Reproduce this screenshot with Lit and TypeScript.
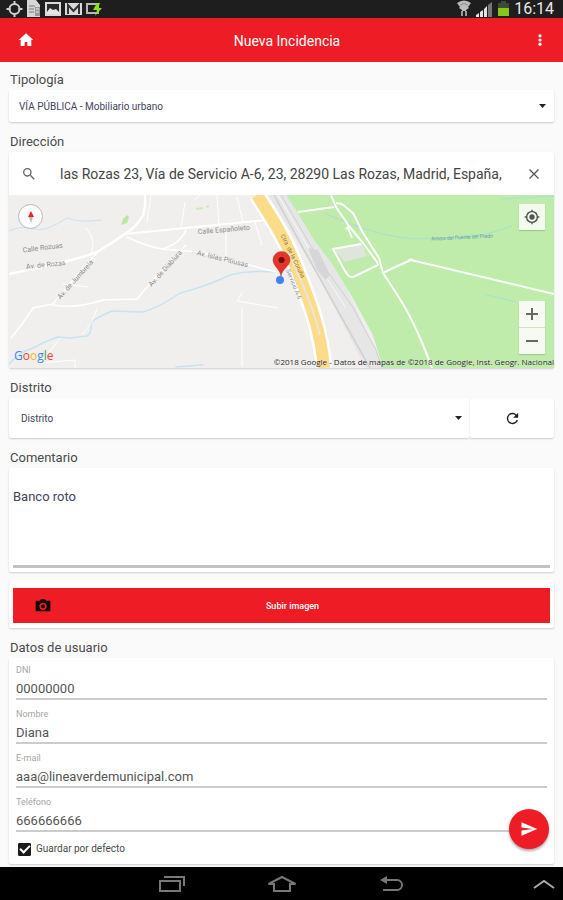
import { LitElement, html, css, svg } from "lit";
import { customElement, state } from "lit/decorators.js";

interface Field {
  id: string;
  label: string;
  value: string;
  type: string;
}

const FIELDS: Field[] = [
  { id: "dni", label: "DNI", value: "00000000", type: "text" },
  { id: "nombre", label: "Nombre", value: "Diana", type: "text" },
  { id: "email", label: "E-mail", value: "aaa@lineaverdemunicipal.com", type: "email" },
  { id: "telefono", label: "Teléfono", value: "666666666", type: "tel" },
];

@customElement("status-bar")
class StatusBar extends LitElement {
  static styles = css`
    :host {
      display: flex;
      align-items: center;
      justify-content: space-between;
      height: 18px;
      padding: 0 9px 0 6px;
      background: #1e1e1e;
      color: #e8e8e8;
      font: 16px/18px Roboto, sans-serif;
    }
    .group {
      display: flex;
      align-items: center;
      gap: 4px;
    }
    svg {
      display: block;
    }
  `;
  render() {
    return html`
      <div class="group">
        <svg width="17" height="18" viewBox="0 0 17 18" fill="none" stroke="#d0d0d0">
          <circle cx="8.500" cy="9" r="5" stroke-width="2" />
          <path d="M8.500 1v4M8.500 13v4M.5 9h4M12.500 9h4" stroke-width="2" />
        </svg>
        <svg width="14" height="18" viewBox="0 0 14 18">
          <path d="M0 0h9l4 5v12H0z" fill="#d6d6d6" />
          <path d="M2 6h6M2 9h5M2 12h5" stroke="#777" />
          <path d="M8 7h5v9H8z" fill="#999" />
          <path d="M9 9h3M9 12h3" stroke="#eee" />
        </svg>
        <svg width="16" height="18" viewBox="0 0 16 18">
          <path d="M0 2h16v14H0z" fill="#dadada" />
          <path d="M2 4h12v10H2z" fill="#2a2a2a" />
          <path d="M2 12l3-4 3 2 3-1 3 3v2H2z" fill="#e6e6e6" />
        </svg>
        <svg width="17" height="18" viewBox="0 0 17 18">
          <path d="M0 3h17v12H0z" fill="#dadada" />
          <path d="M3 14V5l5.500 6L14 5v9" fill="none" stroke="#333" stroke-width="2" />
        </svg>
        <svg width="16" height="18" viewBox="0 0 16 18">
          <path d="M1 4h11v9H1z" fill="none" stroke="#b9b9b9" stroke-width="2" />
          <path d="M11 3l-4 7h4l-2 6 7-8h-4l2-5z" fill="#8fe01c" />
        </svg>
      </div>
      <div class="group">
        <svg width="16" height="18" viewBox="0 0 16 18">
          <path d="M1 3q7-5 14 0l-3 4 1 1-3 2v1H6v-1L3 8l1-1z" fill="#bdbdbd" />
          <path d="M4 5q4-3 8 0" fill="none" stroke="#888" />
          <path d="M6 11v5M10 11v5" stroke="#9c9c9c" stroke-width="2" />
        </svg>
        <svg width="17" height="18" viewBox="0 0 17 18">
          <path d="M0 17v-2l3-2v4zM4 17v-5l3-2v7zM8 17V9l3-3v11z" fill="#e4e4e4" />
          <path d="M12 17V5l4-3v15z" fill="#777" />
        </svg>
        <svg width="13" height="18" viewBox="0 0 13 18">
          <path d="M4 1h5v2h3v5H1V3h3z" fill="#3d4a35" />
          <path d="M1 8h11v8H1z" fill="#85c51c" />
        </svg>
        <span>16:14</span>
      </div>
    `;
  }
}

@customElement("incident-map")
class IncidentMap extends LitElement {
  static styles = css`
    :host {
      display: block;
      position: relative;
      height: 173px;
      overflow: hidden;
      background: #f0efee;
    }
    .canvas {
      display: block;
      width: 100%;
      height: 100%;
      font-family: Roboto, sans-serif;
    }
    .street {
      font-size: 7px;
      fill: #8b8b8b;
      text-anchor: middle;
    }
    .highway {
      font-size: 6px;
      fill: #96732b;
      text-anchor: middle;
    }
    .service {
      font-size: 6px;
      fill: #7f93a3;
      text-anchor: middle;
    }
    .stream {
      font-size: 5px;
      fill: #5d9bb0;
      text-anchor: middle;
    }
    button {
      display: flex;
      align-items: center;
      justify-content: center;
      width: 26px;
      height: 26px;
      padding: 0;
      border: 0;
      background: rgba(255, 255, 255, 0.8);
      color: #555;
    }
    .compass {
      position: absolute;
      top: 9px;
      left: 9px;
      width: 25px;
      height: 25px;
      border: 1px solid #bbb;
      border-radius: 50%;
    }
    .locate {
      position: absolute;
      top: 9px;
      right: 9px;
      box-shadow: 0 1px 1px rgba(0, 0, 0, 0.15);
    }
    .zoom {
      position: absolute;
      right: 9px;
      bottom: 14px;
      display: flex;
      flex-direction: column;
      gap: 1px;
      background: #cfe3c4;
      box-shadow: 0 1px 1px rgba(0, 0, 0, 0.15);
    }
    .logo {
      position: absolute;
      left: 5px;
      bottom: 4px;
      font: 500 12px/16px "Open Sans", sans-serif;
    }
    .b {
      color: #4285f4;
    }
    .r {
      color: #ea4335;
    }
    .y {
      color: #fbbc05;
    }
    .g {
      color: #34a853;
    }
    .credit {
      position: absolute;
      right: 0;
      bottom: 0;
      font: 8px/12px "Open Sans", sans-serif;
      color: #222;
      white-space: nowrap;
      text-shadow: 0 0 1px #fff;
    }
  `;

  private drawing() {
    return svg`
      <g fill="none" stroke-linejoin="round" stroke-linecap="round">
        <g stroke="#c6e3f2">
          <path d="M9 231Q22 225 33 229T67 218Q80 223 101 220" stroke-width="1" />
          <path d="M9 364Q20 352 33 348Q45 341 58 337L70 338L87 336Q92 333 91 322Q98 317 112 311L143 312Q160 307 180 293Q205 287 230 275Q250 270 276 272" stroke-width="1.500" />
          <path d="M176 367L188 366L203 365" stroke-width="1.500" />
        </g>
        <g stroke="#fff">
          <path d="M145 195Q146 210 142 217Q136 227 125 234Q112 243 97 252Q78 260 9 274" stroke-width="2.500" />
          <path d="M118 238L125 234L267 220" stroke-width="2" />
          <path d="M100 250Q82 268 53 304L33 308Q22 325 11 338" stroke-width="1.500" />
          <path d="M53 305Q75 309 103 300L137 299L153 280L186 245" stroke-width="1.500" />
          <path d="M127 237Q145 246 162 249Q180 244 186 230M162 249L200 252L276 272" stroke-width="1.500" />
          <path d="M97 309Q92 325 82 334M40 362Q52 350 60 338" stroke-width="1" />
          <path d="M151 195L147 222M217 195L219 225M200 195L194 200M237 197L243 222M185 202L181 228M255 222L262 245M226 232L226 256" stroke-width="1" />
          <path d="M242 293L237 301L278 308M242 308V366M40 363L75 360V368" stroke-width="1" />
          <path d="M86 228Q97 240 91 254M63 284L88 287" stroke-width="1" />
        </g>
      </g>
      <path d="M121 225l2-6 4-4 2 2-2 6z" fill="#b9e6a0" />
      <path d="M196 209l7-1M206 207l3-1" stroke="#cdebb8" stroke-width="2" />
      <path d="M268 195H290L334 262L384 368H366L312 265Z" fill="#e6e6e6" />
      <path d="M286 195L298 213L314 240L331 262L351 295L373 335L383 368H554V195Z" fill="#bfebab" />
      <g fill="none" stroke="#cfcfcf">
        <path d="M274 195L304 250L366 361L370 368" stroke-width="1.500" />
        <path d="M281 195L318 258L352 306L376 350L382 368" />
        <path d="M278 195L314 258L346 308" stroke="#f7f7f7" />
      </g>
      <path d="M308 248L318 250L330 275L326 280L317 270Z" fill="#d6d6d8" />
      <g fill="none">
        <path d="M257 195C272 218 286 240 296 267C308 297 321 330 324 368" stroke="#fff" stroke-width="17" />
        <path d="M257 195C272 218 286 240 296 267C308 297 321 330 324 368" stroke="#fbdc8a" stroke-width="12" />
        <path d="M288 251C299 275 314 310 320 335" stroke="#ece5d4" stroke-width="2" />
      </g>
      <g fill="none" stroke="#a8dfd0" stroke-width="1">
        <path d="M324 213L348 223Q385 237 414 239Q450 238 481 235Q500 231 512 226" />
        <path d="M484 294L516 302M500 199L554 196" />
      </g>
      <path d="M335 250L362 244L367 256L344 262Z" fill="#dfe5d8" />
      <g fill="none" stroke="#fff" stroke-width="2" stroke-linejoin="round">
        <path d="M298 212L334 207" />
        <path d="M331 195L336 207L349 226L363 243L377 262L378 265L353 277Q349 278 345 271L333 249L361 244" />
        <path d="M336 203L342 204L353 213L363 233L379 258L383 273Q398 295 407 311Q420 335 432 368" />
        <path d="M349 226L346 229M348 228L352 238" />
        <path d="M383 273L391 269L411 260L554 294" />
      </g>
      <path d="M407 260q4-3 8 0z" fill="#fff" />
      <text class="street" transform="translate(43 250) rotate(-7)">Calle Rozuas</text>
      <text class="street" transform="translate(224 232) rotate(-5)">Calle Españoleto</text>
      <text class="street" transform="translate(46 267) rotate(-6)">Av. de Rozas</text>
      <text class="street" transform="translate(77 281) rotate(-48)">Av. de Jumbrela</text>
      <text class="street" transform="translate(167 270) rotate(-48)">Av. de Diablura</text>
      <text class="street" transform="translate(222 261) rotate(14)">Av. Islas Pitiusas</text>
      <text class="highway" transform="translate(291 257) rotate(64)">Ctra. de la Coruña</text>
      <text class="service" transform="translate(292 285) rotate(68)">Servicio A-6</text>
      <text class="stream" transform="translate(462 239) rotate(-3)">Arroyo del Puente del Prado</text>
      <circle cx="280" cy="280" r="4" fill="#3f83f3" />
      <path d="M281 276C280 269 273 266 273 260A8.500 8.500 0 0 1 290 260C290 266 282 269 281 276Z" fill="#e5352b" stroke="#b92a22" stroke-width="0.500" />
      <circle cx="281.500" cy="260" r="3" fill="#6b0f10" />
    `;
  }

  render() {
    return html`
      <svg class="canvas" viewBox="9 195 545 173" preserveAspectRatio="xMidYMid slice" role="img" aria-label="Mapa">
        ${this.drawing()}
      </svg>
      <button class="compass" aria-label="Orientar al norte">
        <svg width="10" height="14" viewBox="0 0 10 14">
          <path d="M5 1L8 7H2z" fill="#e3262a" />
          <path d="M5 13L7 7H3z" fill="#b9b9b9" />
        </svg>
      </button>
      <button class="locate" aria-label="Mi ubicación">
        <svg width="16" height="16" viewBox="0 0 24 24" fill="#555">
          <path d="M12 8a4 4 0 1 0 0 8 4 4 0 0 0 0-8zm8.940 3A8.990 8.990 0 0 0 13 3.060V1h-2v2.060A8.990 8.990 0 0 0 3.060 11H1v2h2.060A8.990 8.990 0 0 0 11 20.940V23h2v-2.060A8.990 8.990 0 0 0 20.940 13H23v-2zM12 19a7 7 0 1 1 0-14 7 7 0 0 1 0 14z" />
        </svg>
      </button>
      <div class="zoom">
        <button aria-label="Acercar">
          <svg width="12" height="12" viewBox="0 0 12 12" stroke="#666" stroke-width="2"><path d="M0 6h12M6 0v12" /></svg>
        </button>
        <button aria-label="Alejar">
          <svg width="12" height="12" viewBox="0 0 12 12" stroke="#666" stroke-width="2"><path d="M0 6h12" /></svg>
        </button>
      </div>
      <div class="logo"><span class="b">G</span><span class="r">o</span><span class="y">o</span><span class="b">g</span><span class="g">l</span><span class="r">e</span></div>
      <div class="credit">©2018 Google - Datos de mapas de ©2018 de Google, Inst. Geogr. Nacional</div>
    `;
  }
}

@customElement("app-root")
class AppRoot extends LitElement {
  @state() private address = "las Rozas 23, Vía de Servicio A-6, 23, 28290 Las Rozas, Madrid, España,";

  static styles = css`
    :host {
      display: flex;
      flex-direction: column;
      min-height: 100vh;
      background: #fafafa;
      color: #4a4a4a;
      font: 13px/20px Roboto, sans-serif;
    }
    * {
      box-sizing: border-box;
    }
    svg {
      display: block;
    }
    button,
    input,
    select,
    textarea {
      margin: 0;
      padding: 0;
      border: 0;
      border-radius: 0;
      outline: 0;
      background: none;
      color: inherit;
      font: inherit;
    }
    header {
      display: grid;
      grid-template-columns: 42px 1fr 34px;
      align-items: center;
      height: 44px;
      padding: 0 6px 0 9px;
      background: #ee1c25;
      color: #fff;
    }
    .icon {
      display: flex;
      align-items: center;
      justify-content: center;
      height: 32px;
    }
    header .icon {
      width: 34px;
    }
    h1 {
      margin: 0;
      padding-top: 2px;
      font: inherit;
      font-size: 14px;
      text-align: center;
    }
    main {
      position: relative;
      flex: 1;
      padding: 6px 9px 3px;
    }
    .caption {
      display: block;
      margin: 0;
      padding: 2px 0 0 1px;
      font: inherit;
    }
    .card {
      margin-bottom: 8px;
      background: #fff;
      border-radius: 2px;
      box-shadow: 0 1px 2px rgba(0, 0, 0, 0.18);
    }
    .card.last {
      margin-bottom: 0;
    }
    .picker {
      display: grid;
      align-items: center;
      flex: 1;
      height: 32px;
      color: #43435a;
      font-size: 10px;
    }
    .picker > * {
      grid-area: 1 / 1;
    }
    .picker select {
      width: 100%;
      height: 100%;
      padding: 2px 24px 0 10px;
      appearance: none;
    }
    .picker svg {
      justify-self: end;
      margin-right: 8px;
      pointer-events: none;
    }
    .search {
      display: grid;
      grid-template-columns: 40px 1fr 40px;
      align-items: center;
      height: 43px;
      color: #444;
      font-size: 14px;
    }
    .search input {
      width: 100%;
      padding-left: 11px;
    }
    .split {
      display: flex;
      margin-bottom: 8px;
    }
    .split .card {
      margin: 0;
    }
    .split .picker {
      height: 40px;
    }
    .split .picker select {
      padding-left: 12px;
    }
    .reload {
      width: 84px;
    }
    .reload .icon {
      width: 100%;
      height: 40px;
    }
    .comment {
      height: 104px;
      padding: 0 4px 4px;
    }
    .comment textarea {
      display: block;
      width: 100%;
      height: 100%;
      padding-top: 19px;
      border-bottom: 3px solid #c2c2c2;
      color: #43435a;
      resize: none;
    }
    .upload {
      padding: 8px 4px 5px;
    }
    .upload button {
      display: grid;
      grid-template-columns: 60px 1fr 38px;
      align-items: center;
      justify-items: center;
      width: 100%;
      height: 35px;
      background: #ee1c25;
      color: #fff;
      font-size: 9px;
      font-weight: 500;
    }
    .user {
      padding: 4px 7px 6px;
    }
    .field {
      height: 44px;
      padding-top: 1px;
    }
    .field label {
      display: block;
      color: #a4a4a4;
      font-size: 9px;
      line-height: 14px;
    }
    .field input {
      display: block;
      width: 100%;
      height: 23px;
      padding-top: 2px;
      border-bottom: 2px solid #ccc;
      color: #555;
    }
    .remember {
      display: flex;
      align-items: center;
      gap: 5px;
      padding: 2px 0 0 2px;
      line-height: 18px;
      font-size: 10px;
    }
    .remember input {
      display: grid;
      place-items: center;
      width: 13px;
      height: 13px;
      appearance: none;
      border: 1px solid #1b1b1f;
      border-radius: 1px;
    }
    .remember input:checked {
      background: #1b1b1f;
    }
    .remember input:checked::before {
      content: "";
      width: 8px;
      height: 4px;
      border: solid #fff;
      border-width: 0 0 2px 2px;
      transform: translateY(-1px) rotate(-45deg);
    }
    .send {
      position: absolute;
      right: 14px;
      bottom: 18px;
      display: flex;
      align-items: center;
      justify-content: center;
      width: 40px;
      height: 40px;
      border-radius: 50%;
      background: #ee1c25;
      box-shadow: 0 2px 3px rgba(0, 0, 0, 0.35);
    }
    nav {
      display: grid;
      grid-template-columns: 1fr repeat(3, 110px) 1fr;
      align-items: center;
      height: 33px;
      background: #000;
    }
    nav button {
      display: flex;
      justify-content: center;
    }
    nav .recents {
      grid-column: 2;
    }
    nav .expand {
      justify-self: end;
      padding-right: 8px;
    }
  `;

  private arrow() {
    return html`<svg width="7" height="4" viewBox="0 0 7 4"><path d="M0 0h7L3.500 4z" fill="#222" /></svg>`;
  }

  private onAddress(e: Event) {
    this.address = (e.target as HTMLInputElement).value;
  }

  private clearAddress() {
    this.address = "";
  }

  render() {
    return html`
      <status-bar></status-bar>
      <header>
        <button class="icon" aria-label="Inicio">
          <svg width="16" height="16" viewBox="0 0 24 24" fill="#fff"><path d="M10 21v-6h4v6h6v-9h3L12 2 1 12h3v9z" /></svg>
        </button>
        <h1>Nueva Incidencia</h1>
        <button class="icon" aria-label="Más opciones">
          <svg width="4" height="12" viewBox="0 0 4 12" fill="#fff"><circle cx="2" cy="1.800" r="1.600" /><circle cx="2" cy="6" r="1.600" /><circle cx="2" cy="10.200" r="1.600" /></svg>
        </button>
      </header>
      <main>
        <label class="caption" for="tipologia">Tipología</label>
        <div class="card picker">
          <select id="tipologia"><option>VÍA PÚBLICA - Mobiliario urbano</option></select>
          ${this.arrow()}
        </div>

        <label class="caption" for="direccion">Dirección</label>
        <div class="card">
          <div class="search">
            <button class="icon" aria-label="Buscar">
              <svg width="16" height="16" viewBox="0 0 24 24" fill="#666"><path d="M15.500 14h-.79l-.28-.27a6.500 6.500 0 1 0-.7.700l.27.280v.790l5 4.990L20.490 19zm-6 0a4.500 4.500 0 1 1 0-9 4.500 4.500 0 0 1 0 9z" /></svg>
            </button>
            <input id="direccion" type="text" .value=${this.address} @input=${this.onAddress} />
            <button class="icon" aria-label="Borrar" @click=${this.clearAddress}>
              <svg width="10" height="10" viewBox="0 0 10 10" stroke="#555" stroke-width="1.300"><path d="M.5.5l9 9M9.500.5l-9 9" /></svg>
            </button>
          </div>
          <incident-map></incident-map>
        </div>

        <label class="caption" for="distrito">Distrito</label>
        <div class="split">
          <div class="card picker">
            <select id="distrito"><option>Distrito</option></select>
            ${this.arrow()}
          </div>
          <div class="card reload">
            <button class="icon" aria-label="Actualizar">
              <svg width="17" height="17" viewBox="0 0 24 24" fill="#222"><path d="M17.650 6.350A7.950 7.950 0 0 0 12 4a8 8 0 1 0 7.730 10h-2.080A6 6 0 1 1 12 6c1.660 0 3.140.690 4.220 1.780L13 11h7V4z" /></svg>
            </button>
          </div>
        </div>

        <label class="caption" for="comentario">Comentario</label>
        <div class="card comment"><textarea id="comentario" .value=${"Banco roto"}></textarea></div>

        <div class="card upload">
          <button>
            <svg width="16" height="16" viewBox="0 0 24 24" fill="#140404"><circle cx="12" cy="12.500" r="3" /><path fill-rule="evenodd" d="M9 2L7.200 4H2a1 1 0 0 0-1 1v15h22V5a1 1 0 0 0-1-1h-5.200L15 2zm3 16a5.500 5.500 0 1 1 0-11 5.500 5.500 0 0 1 0 11z" /></svg>
            <span>Subir imagen</span>
          </button>
        </div>

        <h2 class="caption">Datos de usuario</h2>
        <div class="card last user">
          ${FIELDS.map(
            (f) => html`<div class="field">
              <label for=${f.id}>${f.label}</label>
              <input id=${f.id} type=${f.type} .value=${f.value} />
            </div>`
          )}
          <label class="remember"><input type="checkbox" checked />Guardar por defecto</label>
        </div>
        <button class="send" aria-label="Enviar">
          <svg width="18" height="18" viewBox="0 0 24 24" fill="#fff"><path d="M2.010 21L23 12 2.010 3 2 10l15 2-15 2z" /></svg>
        </button>
      </main>
      <nav>
        <button class="recents" aria-label="Recientes">
          <svg width="28" height="18" viewBox="0 0 28 18" fill="none" stroke="#777" stroke-width="2"><path d="M2 6h20v10H2zM6 2h20v9" /></svg>
        </button>
        <button aria-label="Inicio">
          <svg width="30" height="18" viewBox="0 0 30 18" fill="none" stroke="#777" stroke-width="2"><path d="M7 16V9H1.500L15 2l13.500 7H23v7z" /></svg>
        </button>
        <button aria-label="Atrás">
          <svg width="24" height="18" viewBox="0 0 24 18"><path d="M5 5h12a5 5 0 0 1 0 10H3" fill="none" stroke="#777" stroke-width="2" /><path d="M0 5l7-4v8z" fill="#777" /></svg>
        </button>
        <button class="expand" aria-label="Desplegar">
          <svg width="22" height="12" viewBox="0 0 22 12" fill="none" stroke="#aaa" stroke-width="2"><path d="M1 10l10-7 10 7" /></svg>
        </button>
      </nav>
    `;
  }
}
